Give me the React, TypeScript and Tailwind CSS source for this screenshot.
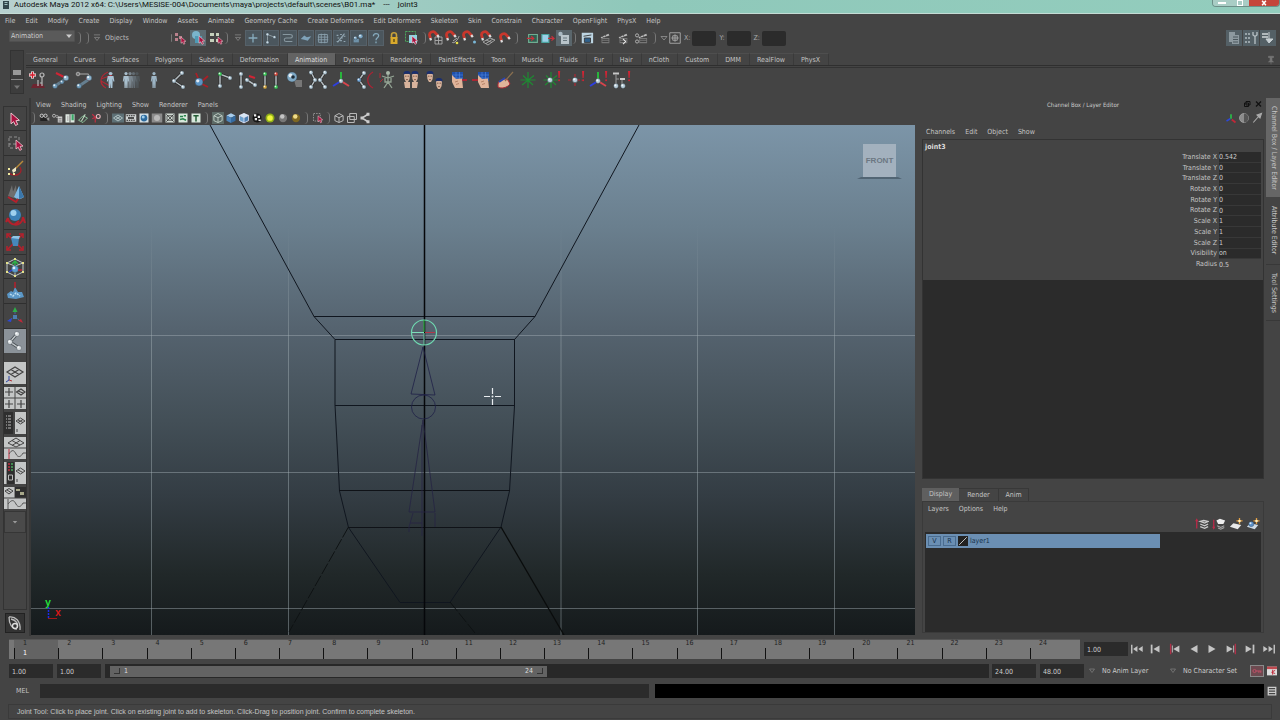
import React from 'react';

interface IconProps {
  children: React.ReactNode;
  className?: string;
  box?: number;
}

const Icon: React.FC<IconProps> = ({ children, className = 'size-4', box = 16 }) => (
  <svg viewBox={`0 0 ${box} ${box}`} className={`shrink-0 ${className}`} fill="none" aria-hidden="true">
    {children}
  </svg>
);

const Ball: React.FC<{ x: number; y: number; r?: number; fill?: string }> = ({ x, y, r = 2, fill = '#b9cfdc' }) => (
  <>
    <circle cx={x} cy={y} r={r} fill={fill} stroke="#2f3a42" strokeWidth=".4" />
    <circle cx={x - r * 0.3} cy={y - r * 0.3} r={r * 0.4} fill="#fff" opacity=".8" />
  </>
);

const Pointer: React.FC<{ x: number; y: number; s?: number }> = ({ x, y, s = 1 }) => (
  <path
    transform={`translate(${x} ${y}) scale(${s})`}
    d="M0 0V9L2.2 7.2L3.8 10.4L5.6 9.5L4.1 6.4L7 6.1Z"
    fill="#a8123f"
    stroke="#f2c9d2"
    strokeWidth=".8"
  />
);

const Bone: React.FC<{ d: string }> = ({ d }) => (
  <>
    <path d={d} stroke="#222" strokeWidth="2.6" />
    <path d={d} stroke="#b4bcc0" strokeWidth="1.5" />
  </>
);

const Magnet = () => (
  <>
    <path d="M2.5 8.5L1.6 5.4C1 2.4 5.4 .4 7.3 2.8L10 6" stroke="#c9372c" strokeWidth="2.8" />
    <path d="M2.3 8L3 10.4M9.2 5L10.8 7.2" stroke="#ddd" strokeWidth="2.2" />
  </>
);

const Clapper = () => (
  <>
    <path d="M4 8H13V14H4Z" fill="#777" />
    <path d="M3 7L12 3L13 5L4 8.4Z" fill="#bbb" />
    <path d="M5 6.4L6.5 7.4M8 5L9.5 6.2M5 10H12M5 12H12" stroke="#333" strokeWidth=".9" />
  </>
);

const Person: React.FC<{ x: number; fill: string }> = ({ x, fill }) => (
  <g transform={`translate(${x} 0)`} fill={fill}>
    <circle cx="0" cy="3.6" r="1.6" />
    <path d="M-2.4 6H2.4L3.2 11.5H2.3L1.7 8.5V12L1.5 18H.3L0 13L-.3 18H-1.5L-1.7 12V8.5L-2.3 11.5H-3.2Z" />
  </g>
);

const Face: React.FC<{ x: number; y: number }> = ({ x, y }) => (
  <g transform={`translate(${x} ${y})`}>
    <path d="M0 3H6L5.6 8L4 11H2L.4 8Z" fill="#d8b39c" />
    <path d="M-.3 4V1.3C1 -.4 5 -.4 6.3 1.3V4L5 2.8H1Z" fill="#1b2f6e" />
    <path d="M1.2 5.2H2.4M3.6 5.2H4.8M2.2 8.6H3.8" stroke="#5c3324" strokeWidth=".8" />
  </g>
);

const Hand = () => (
  <>
    <path d="M4 2H15V11H4Z" fill="#1f4fa8" />
    <path d="M4 5H15M4 8H15M8 2V11M11.5 2V11" stroke="#4d86e0" strokeWidth=".6" />
    <path d="M4 5L8 9L14 8.5L15 18H7L4 12Z" fill="#e0b49a" />
    <path d="M7 12L10 11M8 14.5L11 13.5" stroke="#a26c50" strokeWidth=".7" />
  </>
);

const Bang = () => (
  <>
    <path d="M17 1H19.2L18.6 8H17.6Z" fill="#d02434" />
    <circle cx="18.1" cy="10.2" r="1" fill="#d02434" />
  </>
);

const Axes = () => (
  <>
    <path d="M10 11V2" stroke="#28b43c" strokeWidth="2" />
    <path d="M10 11L2 16" stroke="#2d3fe0" strokeWidth="2" />
    <path d="M10 11L18 16" stroke="#d8444c" strokeWidth="2" />
  </>
);

const Star = () => (
  <path d="M10 2V18M2.5 10H17.5M4 15L16 5.5M5 5.5L15 15" stroke="#1f8a33" strokeWidth="1.2" />
);

const topMenus = [
  'File', 'Edit', 'Modify', 'Create', 'Display', 'Window', 'Assets', 'Animate', 'Geometry Cache',
  'Create Deformers', 'Edit Deformers', 'Skeleton', 'Skin', 'Constrain', 'Character', 'OpenFlight',
  'PhysX', 'Help',
];

const shelfTabs = [
  'General', 'Curves', 'Surfaces', 'Polygons', 'Subdivs', 'Deformation', 'Animation', 'Dynamics',
  'Rendering', 'PaintEffects', 'Toon', 'Muscle', 'Fluids', 'Fur', 'Hair', 'nCloth', 'Custom', 'DMM',
  'RealFlow', 'PhysX',
];

const shelfItems: [string, React.ReactNode][] = [
  ['Set Key', <><path d="M3 18H17L15 14H5Z" fill="#6d2530" /><circle cx="14" cy="5" r="2" stroke="#b9b9b9" strokeWidth="1.2" /><path d="M14 7V16M14 13H12M10 10V16" stroke="#b9b9b9" strokeWidth="1.2" /><path d="M4.5 1.5V8.5M1 5H8" stroke="#fff" strokeWidth="3" /><path d="M4.5 2V8M1.5 5H7.5" stroke="#d01c2c" strokeWidth="1.6" /></>],
  ['IK Key', <><path d="M5 3L13 7" stroke="#d02434" strokeWidth="2" /><path d="M4 16L13 10" stroke="#667f90" strokeWidth="3" /><Ball x={4} y={16} r={2.5} fill="#6f9dbd" /><Ball x={11} y={12} r={2} fill="#6f9dbd" /><Ball x={15} y={8} r={2.8} fill="#8cb4ce" /></>],
  ['Full Body Key', <><path d="M3 4H14L16 7" stroke="#aaa" strokeWidth="1.2" /><circle cx="4" cy="4" r="1.8" stroke="#aaa" /><path d="M5 16L14 10" stroke="#667f90" strokeWidth="3" /><Ball x={5} y={16} r={2.5} fill="#6f9dbd" /><path d="M12 8L16 10" stroke="#d02434" strokeWidth="2" /><Ball x={15} y={8} r={2.8} fill="#8cb4ce" /></>],
  ['Motion Trail', <><path d="M10 2C1 6 1 14 8 18M3 9L14 5M3 11L12 16" stroke="#b02834" strokeWidth="1.2" /><g transform="translate(-3 0) scale(1.2 1)"><Person x={13} fill="#a9c4d6" /></g></>],
  ['Ghost Selected', <><Person x={16} fill="#50575b" /><Person x={12.5} fill="#626b72" /><Person x={9} fill="#7b8790" /><Person x={5} fill="#a9bfcd" /></>],
  ['Unghost', <Person x={10} fill="#9db5c5" />],
  ['Joint Tool', <><Bone d="M14 3L6 11L15 17" /><Ball x={14} y={3} /><Ball x={6} y={11} /><Ball x={15} y={17} /></>],
  ['IK Handle', <><path d="M9 13L5 3M9 13L17 6M9 13L17 17" stroke="#a82028" strokeWidth="1.8" /><Ball x={8} y={12} r={4} fill="#5b93c4" /></>],
  ['IK Spline', <><Bone d="M6 16V4L16 8" /><Ball x={6} y={16} /><Ball x={6} y={4} fill="#3fd05a" /><Ball x={16} y={8} /></>],
  ['Insert Joint', <><Bone d="M3 17V4M9 10L17 15" /><Ball x={3} y={17} /><Ball x={3} y={4} /><Ball x={9} y={10} /><Ball x={17} y={15} /><path d="M11 6L17 8" stroke="#d02434" strokeWidth="2" /></>],
  ['Reroot Skeleton', <><Bone d="M4 17V4M15 4V17" /><Ball x={4} y={4} fill="#3fd05a" /><Ball x={4} y={17} fill="#d8a83c" /><Ball x={15} y={4} fill="#d84a3c" /><Ball x={15} y={17} fill="#3fd05a" /></>],
  ['Aim Constraint', <><path d="M10 10H18V17H12Z" fill="#777" /><Ball x={8} y={7} r={5} fill="#7ea9c6" /><circle cx="9" cy="7" r="1.8" fill="#1d2c38" /></>],
  ['Mirror Joint', <><Bone d="M3 2L7 10L3 17M17 2L12 10L17 17" /><Ball x={3} y={2.5} /><Ball x={7} y={10} /><Ball x={3} y={17} /><Ball x={17} y={2.5} /><Ball x={12} y={10} /><Ball x={17} y={17} /></>],
  ['Orient Joint', <><Axes /><Ball x={10} y={11} r={2.2} /></>],
  ['Set Preferred Angle', <><Bone d="M9 3L4 10L9 17" /><Ball x={9} y={3} /><Ball x={4} y={10} fill="#6fa5d8" /><Ball x={9} y={17} /><path d="M18 2C11 6 11 14 18 18" stroke="#a82434" strokeWidth="1.3" /></>],
  ['Character Mapper', <><path d="M4 6L10 8L16 6M10 5V12L6 18M10 12L14 18M7 8V12H13V8" stroke="#93a393" strokeWidth="1.3" /><circle cx="10" cy="3" r="2" fill="#a9b8a9" /><path d="M2 3V8M2 12L5 9" stroke="#b02834" /></>],
  ['Blend Shape', <><Face x={3} y={1} /><Face x={11} y={1} /><path d="M3 12H9V18H4ZM11 12H17L16 18H11Z" fill="#d8b39c" /></>],
  ['Edit Blend Shape', <><Face x={2} y={1} /><Face x={11} y={8} /></>],
  ['Lattice', <><Hand /><path d="M14 10H19" stroke="#c02030" strokeWidth="1.6" /></>],
  ['Wrap', <><g transform="translate(3 0)"><Hand /></g><path d="M1 10H7" stroke="#c02030" strokeWidth="1.6" /></>],
  ['Paint Weights', <><path d="M3 14C4 9 10 8 13 10L15 14C12 18 6 19 3 17Z" fill="#e0b49a" stroke="#b02834" /><path d="M4 12L10 8" stroke="#2647b0" strokeWidth="2" /><path d="M10 11L18 2" stroke="#8a7050" strokeWidth="1.2" /></>],
  ['Point Constraint', <Star />],
  ['Parent Constraint', <><Star /><Ball x={9} y={10} r={2.6} /><Bang /></>],
  ['Orient Constraint', <><path d="M10 4V17M3 10H17" stroke="#b02834" strokeWidth="1.2" strokeDasharray="3 1.5" /><Ball x={10} y={10} r={2.6} /><Bang /></>],
  ['Scale Constraint', <><Axes /><Ball x={10} y={11} r={2.4} /><Bang /></>],
  ['Pole Vector', <><path d="M2 3.5H8M9 9H14" stroke="#c8c8c8" strokeWidth="2" /><path d="M5 5V15M5 9H8M11 10V15" stroke="#999" strokeWidth="1" /><Ball x={5} y={16} r={2.4} /><Ball x={12} y={16} r={2.4} /><Bang /></>],
];

const maskIcons: [string, React.ReactNode][] = [
  ['Handles', <path d="M8 3V13M3 8H13" stroke="#86aabd" strokeWidth="1.5" />],
  ['Joints', <><path d="M4 14V4L12 7" stroke="#8d999f" strokeWidth="1.2" /><Ball x={4} y={4} r={1.6} /><Ball x={12} y={7} r={1.6} /><Ball x={4} y={13} r={1.6} /></>],
  ['Curves', <path d="M2 4H10C14 4 14 8 10 8H6C3 8 3 12 6 12H13" stroke="#87979f" strokeWidth="1.2" />],
  ['Surfaces', <path d="M2 9L6 5L9 7L14 6L10 11L6 10Z" fill="#7fa2b8" />],
  ['Deformers', <path d="M3 4H13V13H3ZM6 3V14M10 3V14M2 7H14M2 10H14" stroke="#8aa1ae" />],
  ['Dynamics', <path d="M3 5H5M7 4H9M11 6H13M4 8H6M8 8H10M3 12H5M7 11H9M11 12H13M12 3L4 13" stroke="#93a7b2" strokeWidth="1.3" />],
  ['Rendering', <><path d="M3 9H9V13H3Z" fill="#6f92aa" /><Ball x={11} y={6} r={2.6} fill="#7faac8" /><Ball x={5} y={8} r={2} fill="#7faac8" /></>],
  ['Miscellaneous', <path d="M5 6C5 2 11 2 11 5.5C11 8 8 7.5 8 10.5M8 12V14" stroke="#86aabd" strokeWidth="1.5" />],
];

const snapIcons: [string, React.ReactNode][] = [
  ['Snap to grids', <><path d="M7 7H14V14H7ZM10.5 7V14M7 10.5H14" stroke="#aaa" strokeWidth=".9" /><Magnet /></>],
  ['Snap to curves', <><path d="M7 12C9 15 14 8 14 6M8 11L12 8" stroke="#aaa" /><circle cx="12" cy="13" r="1.3" fill="#e8e04a" /><Magnet /></>],
  ['Snap to points', <><circle cx="12.5" cy="12" r="1.5" fill="#7ab8d8" /><Magnet /></>],
  ['Snap to view planes', <><path d="M3 12L10 8L15 10L8 15ZM6 10L12 12.5M6 13.5L13 9" stroke="#aaa" strokeWidth=".9" /><Magnet /></>],
  ['Make live', <g transform="translate(2 2)"><Magnet /></g>],
];

const inOutIcons: [string, React.ReactNode, boolean][] = [
  ['Inputs', <><path d="M3 4H13V13H3Z" stroke="#6fae92" fill="#315e50" strokeWidth="1.3" /><path d="M1 8.5H8M6 6L9 8.5L6 11" stroke="#c8313c" strokeWidth="1.3" /></>, false],
  ['Outputs', <><path d="M1 4H9V13H1Z" fill="#9bd0e8" stroke="#4ba5a0" strokeWidth="1.3" /><path d="M8 8.5H15M12 6L15 8.5L12 11" stroke="#c8313c" strokeWidth="1.3" /></>, false],
  ['Construction history', <><circle cx="4.5" cy="4" r="2.2" fill="#a9b9c2" /><path d="M5 5H13V14H5Z" fill="#b8c4ca" /><path d="M7 8H11M7 10.5H11" stroke="#697880" /></>, true],
];

const renderIcons: [string, React.ReactNode][] = [
  ['Render view', <><path d="M2 2H15V14H2Z" fill="#bcd4e2" /><path d="M4 6L13 4.5M5 13V8H12V13Z" fill="#31618b" stroke="#333" /></>],
  ['Render current frame', <Clapper />],
  ['IPR render', <><Clapper /><path d="M8 9L11 12L8 15" stroke="#eee" strokeWidth="1.2" /></>],
  ['Render settings', <><g transform="translate(2 0)"><Clapper /></g><circle cx="3.5" cy="5" r="1.8" stroke="#bbb" /><circle cx="3.5" cy="12" r="1.8" stroke="#bbb" /></>],
];

const panelIconsA: [string, React.ReactNode][] = [
  ['Select camera', <><path d="M3 6H12V12H3Z" fill="#222" /><circle cx="5" cy="5" r="2.2" stroke="#ccc" strokeWidth="1.3" /><circle cx="10" cy="5" r="2.2" stroke="#ccc" strokeWidth="1.3" /><path d="M11 9L15 7V12Z" fill="#999" /></>],
  ['Camera attributes', <><circle cx="4" cy="5" r="2" stroke="#ccc" /><circle cx="8" cy="6" r="1.6" stroke="#aaa" /><path d="M9 6H15V14H9Z" fill="#ccc" /><path d="M10 9H14M10 12H14" stroke="#555" /></>],
  ['Bookmarks', <><path d="M2 3H14V14H2Z" fill="#dfe9e2" /><path d="M10 3H13V11H10Z" fill="#3aa566" /><path d="M4 5H6V12H4Z" fill="#bbb" /><path d="M8 3V14" stroke="#333" /></>],
  ['Image plane', <><path d="M2 11L8 5L14 8L8 14Z" stroke="#8bc19a" strokeWidth="1.3" /><path d="M6 12L11 3" stroke="#bcd8c0" strokeWidth="1.5" /></>],
  ['Two-D pan', <><path d="M3 3L8 8M3 9L7 7M7 8V14" stroke="#c02e42" strokeWidth="1.6" /><circle cx="11" cy="6" r="2.6" stroke="#e4b8bd" strokeWidth="1.5" /></>],
];

const panelIconsB: [string, React.ReactNode][] = [
  ['Grid', <><path d="M0 2H16V14H0Z" fill="#5d7076" /><path d="M2 8L8 4L14 8L8 12ZM5 6L11 10M11 6L5 10" stroke="#c8d8da" /></>],
  ['Film gate', <><path d="M1 3H15V13H1Z" fill="#d0d4d4" /><path d="M2 5H14M2 11H14" stroke="#222" strokeDasharray="2 1" strokeWidth="1.5" /><path d="M4 7H12V9H4Z" fill="#222" /></>],
  ['Resolution gate', <><path d="M2 2H14V14H2Z" fill="#d5e0e6" /><circle cx="8" cy="8" r="4.5" fill="#2b6a9e" /><circle cx="7" cy="6.5" r="2" fill="#9ecdec" /></>],
  ['Gate mask', <><path d="M1 2H15V14H1Z" fill="#8c8c8c" /><circle cx="8" cy="8" r="4" fill="#b9b9b9" /></>],
  ['Field chart', <><path d="M2 2H14V14H2Z" fill="#cfd8d2" /><path d="M3 3L13 13M13 3L3 13M4 5H12V11H4Z" stroke="#333" /></>],
  ['Safe action', <><path d="M2 2H14V14H2Z" fill="#d8e8dc" /><path d="M4 6H8M9 5H12M4 10L8 9L12 11" stroke="#27824b" strokeWidth="2" /></>],
  ['Safe title', <><path d="M2 2H14V14H2Z" fill="#d8e8dc" /><path d="M4.5 5H11.5M8 5V12.5" stroke="#235c35" strokeWidth="2" /></>],
];

const Cube: React.FC<{ top: string; left: string; right: string }> = ({ top, left, right }) => (
  <>
    <path d="M8 1.5L14 4.5L8 7.5L2 4.5Z" fill={top} />
    <path d="M2 4.5L8 7.5V14.5L2 11.5Z" fill={left} />
    <path d="M14 4.5L8 7.5V14.5L14 11.5Z" fill={right} />
  </>
);

const panelIconsC: [string, React.ReactNode][] = [
  ['Wireframe', <><path d="M0 0H16V16H0Z" fill="#5c6a66" /><path d="M8 2L13.5 5V11.5L8 14L2.5 11.5V5ZM2.5 5L8 7.5L13.5 5M8 7.5V14" stroke="#c4d2ca" strokeWidth="1.2" /></>],
  ['Smooth shade', <Cube top="#a8cdec" left="#4d85bb" right="#356a9f" />],
  ['Wire on shaded', <><Cube top="#d4e6f4" left="#6ea3cf" right="#4d7eae" /><path d="M8 2L14 4.5V11.5L8 14.5L2 11.5V4.5ZM2 4.5L8 7.5L14 4.5M8 7.5V14.5" stroke="#eef" /></>],
  ['Textured', <><circle cx="8" cy="8" r="6" fill="#151515" /><path d="M4 3H7V6H4ZM9 5H12V8H9ZM5 8H8V11H5ZM10 10H13V12H10Z" fill="#eee" /></>],
  ['Use all lights', <><circle cx="8" cy="8" r="6" fill="#8fae18" /><circle cx="8" cy="8" r="3.8" fill="#eff53c" /></>],
  ['Shadows', <><circle cx="8" cy="8" r="5.5" fill="#777" /><circle cx="7" cy="6" r="3" fill="#c4c4c4" /></>],
  ['High quality', <><circle cx="8" cy="8" r="5.5" fill="#7e6722" /><circle cx="7" cy="6" r="3" fill="#efdc88" /></>],
];

const tools: [string, React.ReactNode][] = [
  ['Select', <Pointer x={7} y={5} s={1.2} />],
  ['Lasso', <><path d="M5 5H15V12H5Z" stroke="#8f8f8f" strokeDasharray="3 2" /><path d="M5 12V16H10" stroke="#8f8f8f" strokeDasharray="3 2" /><Pointer x={12} y={8} /></>],
  ['Paint Select', <><path d="M16 10C20 18 10 20 5 16" stroke="#a3202a" strokeWidth="1.4" /><path d="M11 12L19 4" stroke="#b98a3a" strokeWidth="1.4" /><path d="M8 13L12 10L12 14L9 16Z" fill="#efe8c8" /><path d="M4 11H6V13H4ZM4 16H6V18H4ZM9 16H11V18H9Z" fill="#f0e9a0" /></>],
  ['Move', <><path d="M8 3L4 14L10 16ZM12 3L7 14L13 17Z" fill="#6e6e6e" /><path d="M15 4L10 15Q15 19 20 15Z" fill="#7fb8e2" /><path d="M15 4L15 17L20 15Z" fill="#3a76ab" /><path d="M4 15L12 20L14 17" stroke="#b6202c" strokeWidth="2" /></>],
  ['Rotate', <><path d="M4 12C4 20 18 22 19 11M4 12L2 16M19 11L21 17M10 19L15 15" stroke="#b6202c" strokeWidth="2" /><circle cx="11" cy="9" r="6" fill="#3c80b6" /><circle cx="9.5" cy="7" r="3" fill="#9fd0ee" /></>],
  ['Scale', <><path d="M3 3L19 19M19 3L3 19" stroke="#b6202c" strokeWidth="1.6" /><path d="M3 7V3H7M15 3H19V7M3 15V19H7M15 19H19V15" stroke="#b6202c" strokeWidth="1.5" /><path d="M7 7H15L14 15H9Z" fill="#4688bc" /><path d="M7 7L9 5H16L15 8Z" fill="#8fc4e6" /></>],
  ['Universal Manipulator', <><path d="M3 7L11 3L19 7V16L11 20L3 16ZM3 7L11 10L19 7M11 10V20" stroke="#bfc6c8" /><path d="M11 12V5M8 8L11 5L14 8" stroke="#2db048" strokeWidth="1.5" /><Ball x={11} y={13} r={3.5} fill="#5b9fd0" /><path d="M14 14H18" stroke="#c02838" strokeWidth="1.5" /><path d="M8 14L5 16" stroke="#2d48d8" strokeWidth="1.5" /><path d="M2 6H4V8H2ZM10 2H12V4H10ZM18 6H20V8H18ZM2 15H4V17H2ZM18 15H20V17H18ZM10 19H12V21H10Z" fill="#e6e28a" /></>],
  ['Soft Modification', <><path d="M3 14L7 11L9 12L11 7L14 12L18 12L20 17L12 19L4 18Z" fill="#5b97c6" /><path d="M6 14L9 16L12 13L16 16" stroke="#bcdcf0" strokeWidth="1.5" strokeDasharray="2 1" /><path d="M11 8V2" stroke="#b6202c" strokeWidth="1.5" /></>],
  ['Show Manipulator', <><path d="M11 12V5M11 12L5 15M11 12L17 16" stroke="#4a6a9a" strokeDasharray="2 1" /><path d="M11 2L13.5 7H8.5Z" fill="#2db048" /><path d="M3 16L8 13L7 17Z" fill="#2d48d8" /><path d="M19 18L14 15.5L17 14Z" fill="#c02838" /><path d="M9 10H13V14H9Z" fill="#4c7daf" /></>],
];

const layouts: [string, React.ReactNode][] = [
  ['Single Perspective View', <><path d="M0 0H22V22H0Z" fill="#c4c6c6" /><path d="M3 10L11 5L19 10L11 15ZM7 7.5L15 12.5M15 7.5L7 12.5" stroke="#444" strokeWidth="1.2" /><path d="M5 14V18M5 18L2 20" stroke="#2d48a8" /><path d="M5 18L8 19" stroke="#b03038" /></>],
  ['Four View', <><path d="M0 0H10.5V10.5H0ZM11.5 0H22V10.5H11.5ZM0 11.5H10.5V22H0ZM11.5 11.5H22V22H11.5Z" fill="#c4c6c6" /><path d="M1 5H9M5 1V9M1 17H9M5 13V21M13 17H21M17 13V21M12.5 5L17 2L21 5L17 8ZM14 4L19 6" stroke="#444" strokeWidth="1.2" /></>],
  ['Outliner and Perspective', <><path d="M0 0H9V22H0Z" fill="#2e2e2e" /><path d="M2 4H7M2 7H7M2 10H7M2 13H7M2 16H7" stroke="#bbb" strokeDasharray="1 1 4 1" /><path d="M11 0H22V22H11Z" fill="#c4c6c6" /><path d="M12 9L16.5 6L21 9L16.5 12ZM14 8L19 10.5M19 7.5L14 10.5M13 17V20" stroke="#444" /></>],
  ['Perspective and Graph', <><path d="M0 0H22V10.5H0ZM0 11.5H22V22H0Z" fill="#c4c6c6" /><path d="M4 6L12 1L20 6L12 10ZM8 3.5L16 8M16 3.5L8 8.5" stroke="#444" /><path d="M5 12V22" stroke="#c03040" /><path d="M5 17C8 12 10 13 12 17S17 20 19 16H22" stroke="#555" /></>],
  ['Hypershade and Perspective', <><path d="M0 0H2.5V22H0ZM11 0H22V22H11Z" fill="#c4c6c6" /><path d="M3 0H10V22H3Z" fill="#2e2e2e" /><path d="M5 1V9" stroke="#c03040" strokeWidth="1.5" strokeDasharray="2 1" /><path d="M8 1V9" stroke="#49a85c" strokeWidth="1.5" strokeDasharray="2 1" /><path d="M4.5 13H8.5V18H4.5Z" stroke="#bbb" /><path d="M12 9L16.5 6L21 9L16.5 12ZM14 8L19 10.5M13 17V20" stroke="#444" /></>],
  ['Perspective, Hypergraph and Graph', <><path d="M0 0H10.5V10.5H0ZM0 11.5H22V22H0Z" fill="#c4c6c6" /><path d="M11 0H22V10.5H11Z" fill="#2e2e2e" /><path d="M12 2H16V4H12ZM16 5H20V8H16Z" fill="#a8a88a" /><path d="M1 4L5 1.5L9 4L5 7ZM3 3L7 5.5" stroke="#444" /><path d="M4 12V22M4 17C8 12 10 13 12 17S17 20 19 16H22" stroke="#555" /></>],
];

const channels: [string, string][] = [
  ['Translate X', '0.542'], ['Translate Y', '0'], ['Translate Z', '0'],
  ['Rotate X', '0'], ['Rotate Y', '0'], ['Rotate Z', '0'],
  ['Scale X', '1'], ['Scale Y', '1'], ['Scale Z', '1'],
  ['Visibility', 'on'], ['Radius', '0.5'],
];

const layerIcons: [string, React.ReactNode][] = [
  ['Move layer up', <><path d="M2 13V3M1 5L2 3L3 5" stroke="#c02848" strokeWidth="1.4" /><path d="M6 5L10 4L15 5L11 7ZM6 8L11 10L15 8M6 11L11 13L15 11" stroke="#ccc" strokeWidth="1.5" /></>],
  ['Move layer down', <><path d="M2 3V13M1 11L2 13L3 11" stroke="#c02848" strokeWidth="1.4" /><path d="M5 4L9 2L15 4L13 8L7 8Z" fill="#eee" /><path d="M6 10L10 12L14 10M7 12.5L10 14L14 12" stroke="#aaa" strokeWidth="1.2" /></>],
  ['New empty layer', <><path d="M1 11L5 7L14 9L10 14Z" fill="#e8e8e8" /><path d="M12 1V8M8.5 4.5H15.5" stroke="#e09a3c" strokeWidth="1.5" /><circle cx="12" cy="4.5" r="1.5" fill="#fff0c0" /></>],
  ['New layer from selected', <><path d="M1 11L5 7L14 9L10 14Z" fill="#cfdbe6" /><Ball x={6} y={8} r={3} fill="#5a90c8" /><path d="M12 1V8M8.5 4.5H15.5" stroke="#e09a3c" strokeWidth="1.5" /><circle cx="12" cy="4.5" r="1.5" fill="#fff0c0" /></>],
];

const playback: [string, React.ReactNode][] = [
  ['Go to start', <><path d="M2 3V13" stroke="#c4c4c4" strokeWidth="1.6" /><path d="M8.5 4.500V11.500L3.500 8ZM14.5 4.500V11.500L9.500 8Z" fill="#c4c4c4" /></>],
  ['Step back frame', <><path d="M3 3V13" stroke="#c4c4c4" strokeWidth="2" /><path d="M12 4V12L5 8Z" fill="#c4c4c4" /></>],
  ['Step back key', <><path d="M3 2V14" stroke="#b03048" strokeWidth="1.6" /><path d="M13 4V12L6 8Z" fill="#c4c4c4" /><path d="M5 4V12" stroke="#c4c4c4" /></>],
  ['Play backwards', <path d="M12 3.500V12.500L4 8Z" fill="#c4c4c4" />],
  ['Play forwards', <path d="M4 3.500V12.500L12 8Z" fill="#c4c4c4" />],
  ['Step forward key', <><path d="M13 2V14" stroke="#b03048" strokeWidth="1.6" /><path d="M3 4V12L10 8Z" fill="#c4c4c4" /><path d="M11 4V12" stroke="#c4c4c4" /></>],
  ['Step forward frame', <><path d="M12 3V13" stroke="#c4c4c4" strokeWidth="2" /><path d="M3 4V12L10 8Z" fill="#c4c4c4" /></>],
  ['Go to end', <><path d="M14 3V13" stroke="#c4c4c4" strokeWidth="1.6" /><path d="M1.5 4.500V11.500L6.500 8ZM7.5 4.500V11.500L12.500 8Z" fill="#c4c4c4" /></>],
];

const Divider = () => (
  <span className="h-3 w-1 shrink-0 rounded-r-full border-r border-[#777]" />
);

const Triangle = () => (
  <Icon className="size-2.5"><path d="M3 3H13M4 7H12L8 12Z" stroke="#999" strokeWidth="1" /></Icon>
);

const MenuRow: React.FC<{ items: string[]; className?: string; label: string }> = ({ items, className = '', label }) => (
  <nav aria-label={label} className={`flex items-center gap-2.5 whitespace-nowrap ${className}`}>
    {items.map((item) => (
      <button key={item} type="button">{item}</button>
    ))}
  </nav>
);

const PanelIcons: React.FC<{ items: [string, React.ReactNode][] }> = ({ items }) => (
  <div className="grid auto-cols-[13px] grid-flow-col">
    {items.map(([name, art]) => (
      <button key={name} type="button" aria-label={name} className="flex justify-center">
        <Icon className="size-3">{art}</Icon>
      </button>
    ))}
  </div>
);

const TitleBar = () => (
  <header className="flex h-3.5 shrink-0 items-start border-b border-[#c4dcd5] bg-linear-to-r from-[#b7d0cf] via-[#8fc8ba] to-[#93cdbd] pl-0.5 text-[#111]">
    <Icon className="h-2.5 w-2"><path d="M2 0H14V16H2Z" fill="#33474c" /><path d="M5 3H11M5 7H11" stroke="#9fc0c0" strokeWidth="2" /></Icon>
    <h1 className="flex gap-2 pl-1 font-['Roboto','Noto_Sans',sans-serif] text-[8px] leading-[10px] whitespace-pre">
      <span>Autodesk Maya 2012 x64: C:\Users\MESISE-004\Documents\maya\projects\default\scenes\B01.ma*</span>
      <span>---</span>
      <span>joint3</span>
    </h1>
    <div className="ml-auto flex h-[7px] overflow-hidden rounded-b-sm border border-t-0 border-[#6d8f88]">
      <button type="button" aria-label="Minimize" className="flex w-[18px] items-center justify-center bg-[#a9cdc5]">
        <span className="h-0.5 w-2 bg-white" />
      </button>
      <button type="button" aria-label="Restore" className="flex w-[18px] items-center justify-center bg-[#a9cdc5]">
        <span className="size-1.5 border border-white" />
      </button>
      <button type="button" aria-label="Close" className="flex w-[30px] items-center justify-center bg-[#c5453a]">
        <Icon className="h-1.5 w-2"><path d="M3 2L13 14M13 2L3 14" stroke="#fff" strokeWidth="4" /></Icon>
      </button>
    </div>
  </header>
);

const StatusLine = () => (
  <div className="flex h-[22px] shrink-0 items-center pb-0.5 pl-[9px]">
    <div className="relative flex h-4 w-[66px] items-start">
      <select
        aria-label="Menu set"
        className="h-3 w-full appearance-none rounded-[1px] border border-[#505050] bg-[#5a5a5a] pl-px text-[#ccc]"
      >
        <option>Animation</option>
      </select>
      <Icon className="pointer-events-none absolute top-0.5 right-0.5 size-2"><path d="M2 5H14L8 12Z" fill="#ccc" /></Icon>
    </div>
    <div className="flex w-3.5 items-center justify-between pl-0.5"><Divider /><Divider /></div>
    <div className="flex w-[83px] items-center gap-[3px] pl-[3px]">
      <Triangle />
      <span className="text-[#bbb]">Objects</span>
      <span className="ml-auto"><Divider /></span>
    </div>
    <div className="flex w-[52px] items-center justify-between">
      <button type="button" aria-label="Hierarchy mode"><Icon><path d="M3 3H6V6H3ZM3 8H6V11H3ZM7 6H10V9H7Z" fill="#b9818c" /><Pointer x={9} y={7} s={0.7} /></Icon></button>
      <button type="button" aria-label="Object mode" className="bg-[#5d6c73]"><Icon><circle cx="6" cy="5" r="4" fill="#7ab4cc" /><path d="M5 6H12V13H5Z" fill="#4f9ab6" /><Pointer x={9} y={6} s={0.8} /></Icon></button>
      <button type="button" aria-label="Component mode"><Icon><path d="M2 3H6V6H2ZM8 3H11V6H8ZM2 9H6V12H2ZM8 9H11V12H8Z" fill="#c5d0bb" /><Pointer x={10} y={7} s={0.7} /></Icon></button>
    </div>
    <div className="flex w-[21px] items-center justify-between pr-0.5"><Divider /><Triangle /></div>
    <div className="grid w-[139px] grid-cols-8 gap-px">
      {maskIcons.map(([name, art]) => (
        <button key={name} type="button" aria-label={name} className="flex h-4 items-center justify-center border border-[#566169] bg-[#4b565d]">
          <Icon className="size-3.5">{art}</Icon>
        </button>
      ))}
    </div>
    <div className="flex w-[42px] items-center justify-between pl-0.5">
      <button type="button" aria-label="Lock selection"><Icon><path d="M5.5 8V5C5.5 2 10.5 2 10.5 5V8" stroke="#c8a23a" strokeWidth="1.6" /><path d="M4.5 7H11.5V14H4.5Z" fill="#d9a92c" /><path d="M8 9V12" stroke="#5d4a10" strokeWidth="1.4" /></Icon></button>
      <button type="button" aria-label="Highlight selection"><Icon><path d="M1.5 1.5H11.5V11.5H1.500Z" stroke="#4aa85e" strokeDasharray="2 1" /><path d="M5 5H13V13H5Z" fill="#8fd0e0" /><Pointer x={8} y={6} s={0.8} /></Icon></button>
      <Divider />
    </div>
    <div className="flex w-[92px] items-center justify-between pl-0.5">
      {snapIcons.map(([name, art]) => (
        <button key={name} type="button" aria-label={name}><Icon>{art}</Icon></button>
      ))}
      <Divider />
    </div>
    <div className="flex w-[54px] items-center justify-between pl-2">
      {inOutIcons.map(([name, art, on]) => (
        <button key={name} type="button" aria-label={name} className={on ? 'bg-[#5a666c]' : ''}>
          <Icon className={on ? 'size-4' : 'size-3.5'}>{art}</Icon>
        </button>
      ))}
    </div>
    <div className="flex w-[84px] items-center justify-between">
      <Divider />
      {renderIcons.map(([name, art]) => (
        <button key={name} type="button" aria-label={name}><Icon className="size-3.5">{art}</Icon></button>
      ))}
      <Divider />
    </div>
    <div className="ml-1 flex items-center gap-px">
      <Icon className="size-2"><path d="M2 5H14L8 12Z" stroke="#999" strokeWidth="1.5" /></Icon>
      <Icon className="size-3"><path d="M1 1H15V15H1ZM8 3V13M3 8H13M5 5H11V11H5Z" stroke="#aaa" strokeWidth="1.2" /></Icon>
    </div>
    <div className="flex items-center gap-[3px] pl-[3px]">
      {['X', 'Y', 'Z'].map((axis) => (
        <label key={axis} className="flex items-center gap-0.5 text-[#aaa]">
          {axis}:
          <input type="text" aria-label={`${axis} coordinate`} className="h-[15px] w-6 rounded-xs bg-[#2b2b2b]" />
        </label>
      ))}
    </div>
    <div className="ml-auto flex gap-px pr-1">
      <button type="button" aria-label="Attribute editor" className="bg-[#546066]"><Icon><path d="M3 2H9V5H13V14H6V12H3Z" fill="#8d999f" /><path d="M7 7H12M7 9.5H12M7 12H12" stroke="#4b575d" /></Icon></button>
      <button type="button" aria-label="Tool settings" className="bg-[#546066]"><Icon><path d="M2 4H8M2 8H8M2 12H8" stroke="#b0bbc0" strokeWidth="1.5" strokeDasharray="2 1" /><path d="M10 2V5L12 6.5L14 5V2M12 6V14" stroke="#b9c2c6" strokeWidth="1.3" /></Icon></button>
      <button type="button" aria-label="Channel box" className="bg-[#546066]"><Icon><path d="M2 4H8M2 7H8" stroke="#cfd6d9" strokeWidth="1.3" /><path d="M9 2V11M6 9H13L9 13Z" fill="#c6ced2" stroke="#c6ced2" /></Icon></button>
    </div>
  </div>
);

const Shelf = () => (
  <div className="flex h-12 shrink-0 pl-2.5">
    <div className="mr-0.5 mb-1 flex w-3.5 flex-col border border-[#333] bg-[#3d3d3d]">
      <button type="button" aria-label="Shelf tabs" className="flex flex-1 items-end justify-center pb-1"><span className="h-[5px] w-2 bg-[#999]" /></button>
      <button type="button" aria-label="Shelf menu" className="flex h-3.5 items-center justify-center border-t border-[#888]"><Icon className="size-2"><path d="M2 5H14L8 12Z" fill="#777" /></Icon></button>
    </div>
    <div className="flex min-w-0 flex-1 flex-col">
      <div className="flex h-4 items-end justify-between border-b border-[#2f2f2f] pt-[3px] pr-1">
        <div role="tablist" aria-label="Shelves" className="flex h-full whitespace-nowrap">
          {shelfTabs.map((tab) => (
            <button
              key={tab}
              type="button"
              role="tab"
              aria-selected={tab === 'Animation'}
              className={`border-t border-r border-r-[#3a3a3a] pt-px pr-2 pl-[7px] ${tab === 'Animation' ? 'border-t-[#636363] bg-[#636363] text-[#ddd]' : 'border-t-[#4e4e4e]'}`}
            >
              {tab}
            </button>
          ))}
        </div>
        <Icon className="size-2.5"><path d="M4 2H12V4H9.5V9L12 11H4L6.5 9V4H4ZM8 11V15" fill="#777" stroke="#777" /></Icon>
      </div>
      <div className="mt-px flex-1 border-t border-[#333]">
        <div className="grid w-[607px] grid-cols-[repeat(26,minmax(0,1fr))] pt-0.5">
          {shelfItems.map(([name, art]) => (
            <button key={name} type="button" aria-label={name} className="flex justify-center">
              <Icon box={20} className="size-5">{art}</Icon>
            </button>
          ))}
        </div>
      </div>
    </div>
  </div>
);

const ToolBox = () => (
  <aside className="flex w-[31px] shrink-0 flex-col border-r-2 border-[#383838] pt-2">
    <div className="ml-[3px] flex w-6 flex-1 flex-col border border-[#333]">
      {tools.map(([name, art], i) => (
        <button key={name} type="button" aria-label={name} className={`flex w-[22px] items-center justify-center border-b border-[#2f2f2f] ${i % 3 ? 'h-[25px]' : 'h-6'}`}>
          <Icon box={22} className="size-[22px]">{art}</Icon>
        </button>
      ))}
      <button type="button" aria-label="Joint Tool" className="mb-[9px] flex h-6 w-[22px] items-center justify-center bg-[#8b9299]">
        <Icon box={22} className="size-[22px]"><path d="M13 4L6 12L15 18" stroke="#444b50" strokeWidth="3" /><path d="M13 4L6 12L15 18" stroke="#c3c9cc" strokeWidth="1.5" /><Ball x={13} y={4} r={2.5} fill="#dadfe2" /><Ball x={6} y={12} r={2.5} fill="#dadfe2" /><Ball x={15} y={18} r={2.5} fill="#dadfe2" /></Icon>
      </button>
      <div className="flex flex-col gap-[3px]">
        {layouts.map(([name, art]) => (
          <button key={name} type="button" aria-label={name} className="size-[22px]">
            <Icon box={22} className="size-[22px]">{art}</Icon>
          </button>
        ))}
      </div>
      <button type="button" aria-label="More layouts" className="mt-0.5 flex h-[22px] items-center justify-center border border-[#363636] bg-[#4a4a4a]">
        <Icon className="size-1.5"><path d="M2 5H14L8 12Z" fill="#999" /></Icon>
      </button>
    </div>
    <button type="button" aria-label="Paint effects panel" className="my-[3px] ml-[5px] flex size-5 items-center justify-center border border-[#222] bg-[#333]">
      <Icon className="size-4"><path d="M2 2C8 1 14 6 13 15M2 2C2 9 5 14 10 14M4 4C9 5 12 9 10 13" stroke="#bbb" strokeWidth="1.3" /><circle cx="8" cy="11" r="2.5" stroke="#ddd" strokeWidth="1.3" /></Icon>
    </button>
  </aside>
);

const Viewport = () => (
  <div className="min-h-0 flex-1">
    <svg viewBox="0 0 884 510" preserveAspectRatio="xMidYMid slice" className="block size-full" fill="none" role="img" aria-label="Front view">
      <defs>
        <linearGradient id="sky" x1="0" y1="0" x2="0" y2="1">
          <stop offset="0" stopColor="#7c95a8" />
          <stop offset=".2" stopColor="#6a7f8e" />
          <stop offset=".4" stopColor="#55636f" />
          <stop offset=".58" stopColor="#434f57" />
          <stop offset=".73" stopColor="#333c43" />
          <stop offset=".88" stopColor="#212829" />
          <stop offset="1" stopColor="#151a1c" />
        </linearGradient>
        <linearGradient id="fade" gradientUnits="userSpaceOnUse" x1="0" y1="100" x2="0" y2="220">
          <stop offset="0" stopColor="#a3b0b5" stopOpacity="0" />
          <stop offset="1" stopColor="#a3b0b5" stopOpacity=".45" />
        </linearGradient>
      </defs>
      <rect width="884" height="510" fill="url(#sky)" />
      <path d="M120.5 100V510M257.5 100V510M530 100V510M666.5 100V510M803.5 100V510" stroke="url(#fade)" />
      <path d="M0 210.5H884M0 347.5H884M0 483.5H884" stroke="#a3b0b5" strokeOpacity=".45" />

      {/* body mesh */}
      <path d="M179 0L283 191.5L304 214.5V280L308.5 366L317.5 402.5L369 477.5H419L470 402L478.5 366L483.5 281V214.5L504 191.5L608 0" stroke="#10161f" />
      <path d="M283 191.5H504M304 214.5H484M304 280.5H484" stroke="#10161f" />
      <path d="M308 365.5H479M317 402.5H470" stroke="#0f1217" />
      <path d="M317.5 402L258 507M419 477L444 508" stroke="#0e1213" strokeDasharray="12 2" />
      <path d="M470 402L533 510" stroke="#0a0c0c" strokeWidth="1.3" />
      <path d="M393.5 0V510" stroke="#05070a" strokeWidth="1.5" />

      {/* skeleton */}
      <g stroke="#1f2147" strokeOpacity=".8">
        <path d="M392 222L380 269L404 270Z" />
        <circle cx="392.5" cy="282" r="12" />
        <path d="M392 295L378 387H404Z" stroke="#252443" />
        <path d="M391 300V411M382 388L378 402V407M379 398H391M404 388V402" stroke="#252443" />
      </g>
      <circle cx="393" cy="207.5" r="12.5" stroke="#6fd9b0" strokeWidth="1.2" />
      <path d="M381 207.5H393M393 208V220" stroke="#7fdcba" />
      <path d="M393 195V207" stroke="#35c94a" />
      <path d="M394 207.5H404" stroke="#b03a4a" />
      <path d="M461.5 263V269M461.5 274V280M453 271.5H459M464 271.5H470" stroke="#e8ecef" strokeWidth="1.2" />
      <circle cx="461.5" cy="271.5" r="1" fill="#e8ecef" />

      <path d="M830 52H867L871 54H826Z" fill="#3c4c5a" opacity=".6" />
      <rect x="832" y="19" width="33" height="33" fill="#a3b1be" />
      <text x="848.5" y="38" textAnchor="middle" fill="#6c7782" className="font-['Liberation_Sans',sans-serif] text-[8px] font-bold">FRONT</text>

      <path d="M17.5 482V493" stroke="#1e2ce8" strokeWidth="1.5" strokeDasharray="2 1" />
      <path d="M17 493.5H26" stroke="#a01818" />
      <g className="font-['Liberation_Mono',monospace] text-[10px] font-bold">
        <text x="14" y="481" fill="#25e03a">y</text>
        <text x="24" y="491" fill="#d81818">x</text>
      </g>
    </svg>
  </div>
);

const ChannelBox = () => (
  <section className="flex min-w-0 flex-1 flex-col pb-0.5">
    <div className="grid h-3 grid-cols-[1fr_auto_1fr] items-center">
      <span />
      <h2 className="pr-5 text-[6px] text-[#ccc]">Channel Box / Layer Editor</h2>
      <div className="flex justify-end">
        <button type="button" aria-label="Float"><Icon className="h-2 w-[11px]"><path d="M5 3H13V10H5ZM2 6H10V13H2Z" stroke="#111" strokeWidth="2" /></Icon></button>
        <button type="button" aria-label="Close panel"><Icon className="h-2 w-[11px]"><path d="M3 3L13 13M13 3L3 13" stroke="#111" strokeWidth="2.5" /></Icon></button>
      </div>
    </div>
    <div className="flex h-4 items-center justify-end gap-px">
      <Icon className="size-3"><path d="M8 9V3" stroke="#2db048" strokeWidth="2.5" /><path d="M7 9L2 12" stroke="#2d48d8" strokeWidth="2" /><path d="M9 10L14 14" stroke="#c02838" strokeWidth="2.5" /></Icon>
      <Icon className="size-3"><circle cx="8" cy="8" r="6" fill="#8c8c8c" stroke="#aaa" /><path d="M8 2A6 6 0 0 1 8 14Z" fill="#555" /></Icon>
      <Icon className="mr-px size-3"><path d="M3 14L11 5M8 4L14 2L12 8Z" stroke="#aaa" fill="#aaa" strokeWidth="1.5" /></Icon>
    </div>
    <MenuRow label="Channel box" items={['Channels', 'Edit', 'Object', 'Show']} className="h-[13px] pl-1" />
    <div className="flex min-h-0 flex-1 flex-col border border-[#333]">
      <div className="bg-[#444] pr-0.5 pb-2.5">
        <h3 className="h-3 pl-0.5 leading-[14px] font-bold text-[#ddd]">joint3</h3>
        <div className="grid h-[118px] grid-rows-[repeat(11,minmax(0,1fr))]">
          {channels.map(([name, value]) => (
            <label key={name} className="flex items-stretch justify-end gap-0.5">
              <span className="flex items-center">{name}</span>
              <input
                type="text"
                defaultValue={value}
                className={`w-[42px] pt-px text-[#ccc] ${name === 'Radius' ? '' : 'border-b border-[#383838] bg-[#2b2b2b]'}`}
              />
            </label>
          ))}
        </div>
      </div>
      <div className="flex-1 bg-[#2b2b2b]" />
    </div>
  </section>
);

const LayerEditor = () => (
  <section className="flex shrink-0 flex-col pt-[7px]">
    <div role="tablist" aria-label="Layer type" className="flex h-[13px]">
      <button type="button" role="tab" aria-selected="true" className="w-[37px] bg-[#5f5f5f]">Display</button>
      <button type="button" role="tab" aria-selected="false" className="w-10 border-t border-r border-[#383838]">Render</button>
      <button type="button" role="tab" aria-selected="false" className="w-[30px] border-t border-r border-[#383838]">Anim</button>
    </div>
    <div className="border border-[#3a3a3a] px-0.5">
      <MenuRow label="Layer editor" items={['Layers', 'Options', 'Help']} className="h-3.5 pl-[3px]" />
      <div className="flex h-4 items-center justify-end gap-[3px] pr-px">
        {layerIcons.map(([name, art]) => (
          <button key={name} type="button" aria-label={name}><Icon className="size-3.5">{art}</Icon></button>
        ))}
      </div>
      <div className="h-[100px] bg-[#2b2b2b] pt-0.5 pl-px">
        <div className="flex h-3.5 w-[234px] items-center gap-px bg-[#6b8fb3] pl-0.5 text-[#16304a]">
          <button type="button" className="h-2.5 w-[13px] border border-[#4a6c8f] leading-[8px]">V</button>
          <button type="button" className="ml-px h-2.5 w-[13px] border border-[#4a6c8f] leading-[8px]">R</button>
          <Icon className="ml-px size-2.5"><path d="M0 0H16V16H0Z" fill="#222" /><path d="M2 14L14 2" stroke="#ccc" strokeWidth="1.5" /></Icon>
          <span className="pl-px">layer1</span>
        </div>
      </div>
    </div>
  </section>
);

const SideTabs = () => (
  <div role="tablist" aria-label="Side panels" aria-orientation="vertical" className="flex w-3.5 shrink-0 flex-col">
    <button type="button" role="tab" aria-selected="true" className="flex h-[99px] items-center justify-center bg-[#666] [writing-mode:vertical-rl]">Channel Box / Layer Editor</button>
    <button type="button" role="tab" aria-selected="false" className="flex h-[68px] items-center justify-center border-b border-[#383838] [writing-mode:vertical-rl]">Attribute Editor</button>
    <button type="button" role="tab" aria-selected="false" className="flex h-[56px] items-center justify-center border-b border-[#383838] [writing-mode:vertical-rl]">Tool Settings</button>
  </div>
);

const NumberField: React.FC<{ label: string; value: string }> = ({ label, value }) => (
  <input type="text" aria-label={label} defaultValue={value} className="h-3.5 w-11 shrink-0 bg-[#2b2b2b] pt-px pl-[3px] text-[#ccc]" />
);

const TimeSlider = () => (
  <div className="flex h-6 shrink-0 items-start pt-[3px] pl-[9px]">
    <div className="flex h-5 min-w-0 flex-1 border-t border-[#555] bg-[#777] pr-1.5 pl-[5px] text-[#222]">
      {Array.from({ length: 24 }, (_, i) => (
        <div key={i} className={`flex flex-1 items-stretch ${i === 0 ? 'bg-[#636363]' : ''}`}>
          <span className="mt-2 w-px bg-[#111]" />
          <span className="flex flex-col pl-2 leading-[9px]">
            <span className="h-[9px] -translate-y-px">{i + 1}</span>
            {i === 0 && <span className="text-white">1</span>}
          </span>
        </div>
      ))}
    </div>
    <div className="mt-[3px] ml-1"><NumberField label="Current frame" value="1.00" /></div>
    <div className="mt-[3px] grid w-[152px] grid-cols-8 pr-0.5">
      {playback.map(([name, art]) => (
        <button key={name} type="button" aria-label={name} className="flex justify-center"><Icon className="size-3.5">{art}</Icon></button>
      ))}
    </div>
  </div>
);

const RangeSlider = () => (
  <div className="flex h-[22px] shrink-0 items-center pl-[9px]">
    <NumberField label="Animation start" value="1.00" />
    <div className="ml-1"><NumberField label="Playback start" value="1.00" /></div>
    <div className="ml-1 flex h-3.5 min-w-0 flex-1 items-center bg-[#282828] px-[5px]">
      <div className="flex h-[11px] w-1/2 items-center justify-between bg-[#636363] px-1 text-[#ddd]">
        <span className="flex items-center gap-1"><span className="size-1.5 border-r border-b border-[#333]" />1</span>
        <span className="flex items-center gap-1">24<span className="size-1.5 border-r border-b border-[#333]" /></span>
      </div>
    </div>
    <div className="ml-[3px] flex gap-1">
      <NumberField label="Playback end" value="24.00" />
      <NumberField label="Animation end" value="48.00" />
    </div>
    <div className="flex w-[166px] items-center pl-1 whitespace-nowrap text-[#ccc]">
      <button type="button" className="flex flex-1 items-center gap-1.5"><Icon className="size-2"><path d="M3 4H13L8 11Z" stroke="#999" /></Icon>No Anim Layer</button>
      <button type="button" className="flex flex-1 items-center gap-1.5"><Icon className="size-2"><path d="M3 4H13L8 11Z" stroke="#999" /></Icon>No Character Set</button>
    </div>
    <div className="flex w-[30px] items-center gap-[3px]">
      <button type="button" aria-label="Auto keyframe" className="border border-[#8a8a8a] bg-[#6d4a50]"><Icon className="h-2.5 w-3"><circle cx="4" cy="8" r="2.5" stroke="#c05068" strokeWidth="1.5" /><path d="M6 8H15M11 8V11M14 8V11" stroke="#c05068" strokeWidth="1.5" /></Icon></button>
      <button type="button" aria-label="Animation preferences"><Icon className="size-2.5"><path d="M0 1H16V15H0Z" fill="#ddd" /><path d="M0 1H16V5H0Z" fill="#c04a50" /><path d="M9 6V14M7 10L13 12M9 9L13 7" stroke="#c02838" strokeWidth="1.500" /></Icon></button>
    </div>
  </div>
);

const App = () => (
  <div className="flex min-h-screen flex-col overflow-hidden bg-[#444] font-['DejaVu_Sans_Condensed','DejaVu_Sans',sans-serif] text-[7px] leading-[9px] text-[#c4c4c4]">
    <TitleBar />
    <MenuRow label="Main menu" items={topMenus} className="h-3.5 shrink-0 pt-px pl-[5px]" />
    <StatusLine />
    <Shelf />

    <main className="flex min-h-0 flex-1">
      <ToolBox />
      <section className="flex min-w-0 flex-1 flex-col pb-px">
        <MenuRow label="Panel menu" items={['View', 'Shading', 'Lighting', 'Show', 'Renderer', 'Panels']} className="h-3.5 pt-px pl-[5px]" />
        <div className="flex h-[13px] items-center gap-0.5 pb-px">
          <Divider />
          <PanelIcons items={panelIconsA} />
          <Divider />
          <div className="pl-px"><PanelIcons items={panelIconsB} /></div>
          <Divider />
          <div className="pl-px"><PanelIcons items={panelIconsC} /></div>
          <Divider />
          <button type="button" aria-label="Isolate select" className="pl-0.5"><Icon className="size-3"><path d="M2 2H11V12H2Z" stroke="#aaa" strokeDasharray="2 1.5" /><Pointer x={8} y={5} s={0.9} /></Icon></button>
          <Divider />
          <PanelIcons
            items={[
              ['X-ray', <path d="M8 2L13.5 5V11.5L8 14L2.5 11.5V5ZM2.5 5L8 7.5L13.5 5M8 7.5V14" stroke="#bbb" strokeWidth="1.3" />],
              ['X-ray active', <path d="M5 2H14V10H5ZM2 6H11V14H2Z" stroke="#bbb" strokeWidth="1.3" />],
              ['X-ray joints', <><path d="M12 3L4 8L12 13" stroke="#ccc" strokeWidth="2" /><path d="M10 1H14V5H10ZM2 6H6V10H2ZM10 11H14V15H10Z" fill="#ccc" /></>],
            ]}
          />
        </div>
        <Viewport />
      </section>
      <div className="flex w-[365px] shrink-0 pl-[7px]">
        <div className="mr-0.5 flex min-w-0 flex-1 flex-col pb-[3px]">
          <ChannelBox />
          <LayerEditor />
        </div>
        <SideTabs />
      </div>
    </main>

    <TimeSlider />
    <RangeSlider />
    <div className="flex h-[18px] shrink-0 items-center pl-4">
      <label htmlFor="command" className="w-6">MEL</label>
      <input id="command" type="text" className="h-3.5 min-w-0 flex-1 bg-[#2b2b2b]" />
      <output aria-label="Command result" className="ml-1.5 h-3.5 min-w-0 flex-1 bg-black" />
      <button type="button" aria-label="Script editor" className="px-[3px]"><Icon className="size-2.5"><path d="M2 2H14V14H2ZM3 6H13M3 10H13" stroke="#ccc" strokeWidth="2" /></Icon></button>
    </div>
    <footer className="flex h-5 shrink-0 items-center px-2 pt-0.5">
      <p className="flex h-[15px] w-full items-center border border-[#3a3a3a] pl-2 font-['Liberation_Sans',sans-serif]">
        Joint Tool: Click to place joint. Click on existing joint to add to skeleton. Click-Drag to position joint. Confirm to complete skeleton.
      </p>
    </footer>
  </div>
);

export default App;
